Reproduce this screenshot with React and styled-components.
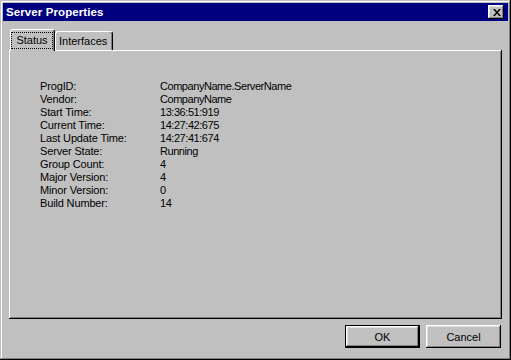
import React from "react";
import styled, { createGlobalStyle } from "styled-components";

const GlobalStyle = createGlobalStyle`
    html, body {
        margin: 0;
        padding: 0;
        background: #c0c0c0;
    }
    * {
        box-sizing: border-box;
    }
`;

const rows = [
    ["ProgID:", "CompanyName.ServerName"],
    ["Vendor:", "CompanyName"],
    ["Start Time:", "13:36:51:919"],
    ["Current Time:", "14:27:42:675"],
    ["Last Update Time:", "14:27:41:674"],
    ["Server State:", "Running"],
    ["Group Count:", "4"],
    ["Major Version:", "4"],
    ["Minor Version:", "0"],
    ["Build Number:", "14"],
];

export default function App() {
    return (
        <>
            <GlobalStyle />
            <Window>
                <TitleBar>
                    <Title>Server Properties</Title>
                    <CloseButton>
                        <svg width="8" height="7" viewBox="0 0 8 7">
                            <path d="M0 0H2L4 2.4L6 0H8L5 3.5L8 7H6L4 4.6L2 7H0L3 3.5Z" fill="#000" />
                        </svg>
                    </CloseButton>
                </TitleBar>
                <Body>
                    <TabRow>
                        <Tab $active $w={45}>
                            <Focus>Status</Focus>
                        </Tab>
                        <Tab $w={58}>Interfaces</Tab>
                    </TabRow>
                    <Panel>
                        <Grid>
                            {rows.map(([label, value]) => (
                                <React.Fragment key={label}>
                                    <Cell>{label}</Cell>
                                    <Value>{value}</Value>
                                </React.Fragment>
                            ))}
                        </Grid>
                    </Panel>
                    <ButtonRow>
                        <Button $default>OK</Button>
                        <Button>Cancel</Button>
                    </ButtonRow>
                </Body>
            </Window>
        </>
    );
}

const Window = styled.div`
    width: 511px;
    height: 360px;
    padding: 3px;
    display: flex;
    flex-direction: column;
    background: #c0c0c0;
    box-shadow: inset -1px -1px #000, inset 1px 1px #c0c0c0,
        inset -2px -2px #808080, inset 2px 2px #fff;
    font-family: "Liberation Sans", Arial, sans-serif;
    font-size: 11px;
    color: #000;
`;

const TitleBar = styled.div`
    height: 18px;
    display: flex;
    align-items: center;
    justify-content: space-between;
    padding: 0 4px 0 3px;
    background: #000080;
`;

const Title = styled.span`
    color: #fff;
    font-weight: bold;
    font-size: 11.5px;
    letter-spacing: 0.1px;
`;

const CloseButton = styled.div`
    width: 16px;
    height: 14px;
    display: flex;
    align-items: center;
    justify-content: center;
    padding-left: 1px;
    background: #c0c0c0;
    box-shadow: inset -1px -1px #000, inset 1px 1px #fff,
        inset -2px -2px #808080, inset 2px 2px #dfdfdf;
`;

const Body = styled.div`
    flex: 1;
    display: flex;
    flex-direction: column;
    padding: 8px 6px 0 6px;
`;

const TabRow = styled.div`
    height: 21px;
    display: flex;
    align-items: flex-end;
    padding-left: 1px;
`;

const Tab = styled.div`
    position: relative;
    z-index: ${(p) => (p.$active ? 2 : 1)};
    width: ${(p) => p.$w}px;
    height: ${(p) => (p.$active ? "22px" : "19px")};
    margin-bottom: ${(p) => (p.$active ? "-1px" : "0")};
    padding: ${(p) => (p.$active ? "3px 0 0 1px" : "3px 0 0 3px")};
    display: flex;
    align-items: flex-start;
    background: #c0c0c0;
    border-top: 1px solid #fff;
    border-left: 1px solid #fff;
    border-right: 1px solid #000;
    border-radius: 3px 3px 0 0;
    box-shadow: inset -1px 0 #808080;
    line-height: 13px;
    white-space: nowrap;
`;

const Focus = styled.span`
    width: 40px;
    height: 15px;
    display: flex;
    align-items: center;
    justify-content: center;
    outline: 1px dotted #000;
`;

const Panel = styled.div`
    height: 269px;
    padding: 30px 31px 0 31px;
    background: #c0c0c0;
    box-shadow: inset -1px -1px #000, inset 1px 1px #fff,
        inset -2px -2px #808080;
`;

const Grid = styled.div`
    display: grid;
    grid-template-columns: 120px auto;
    grid-auto-rows: 13px;
`;

const Cell = styled.div`
    line-height: 13px;
    letter-spacing: -0.15px;
    white-space: nowrap;
`;

const Value = styled(Cell)`
    letter-spacing: -0.45px;
`;

const ButtonRow = styled.div`
    display: flex;
    justify-content: flex-end;
    gap: 6px;
    margin-top: 6px;
    padding-right: 1px;
`;

const Button = styled.div`
    width: 75px;
    height: 23px;
    display: flex;
    align-items: center;
    justify-content: center;
    background: #c0c0c0;
    border: ${(p) => (p.$default ? "1px solid #000" : "none")};
    box-shadow: inset -1px -1px #000, inset 1px 1px #fff,
        inset -2px -2px #808080, inset 2px 2px #dfdfdf;
`;
